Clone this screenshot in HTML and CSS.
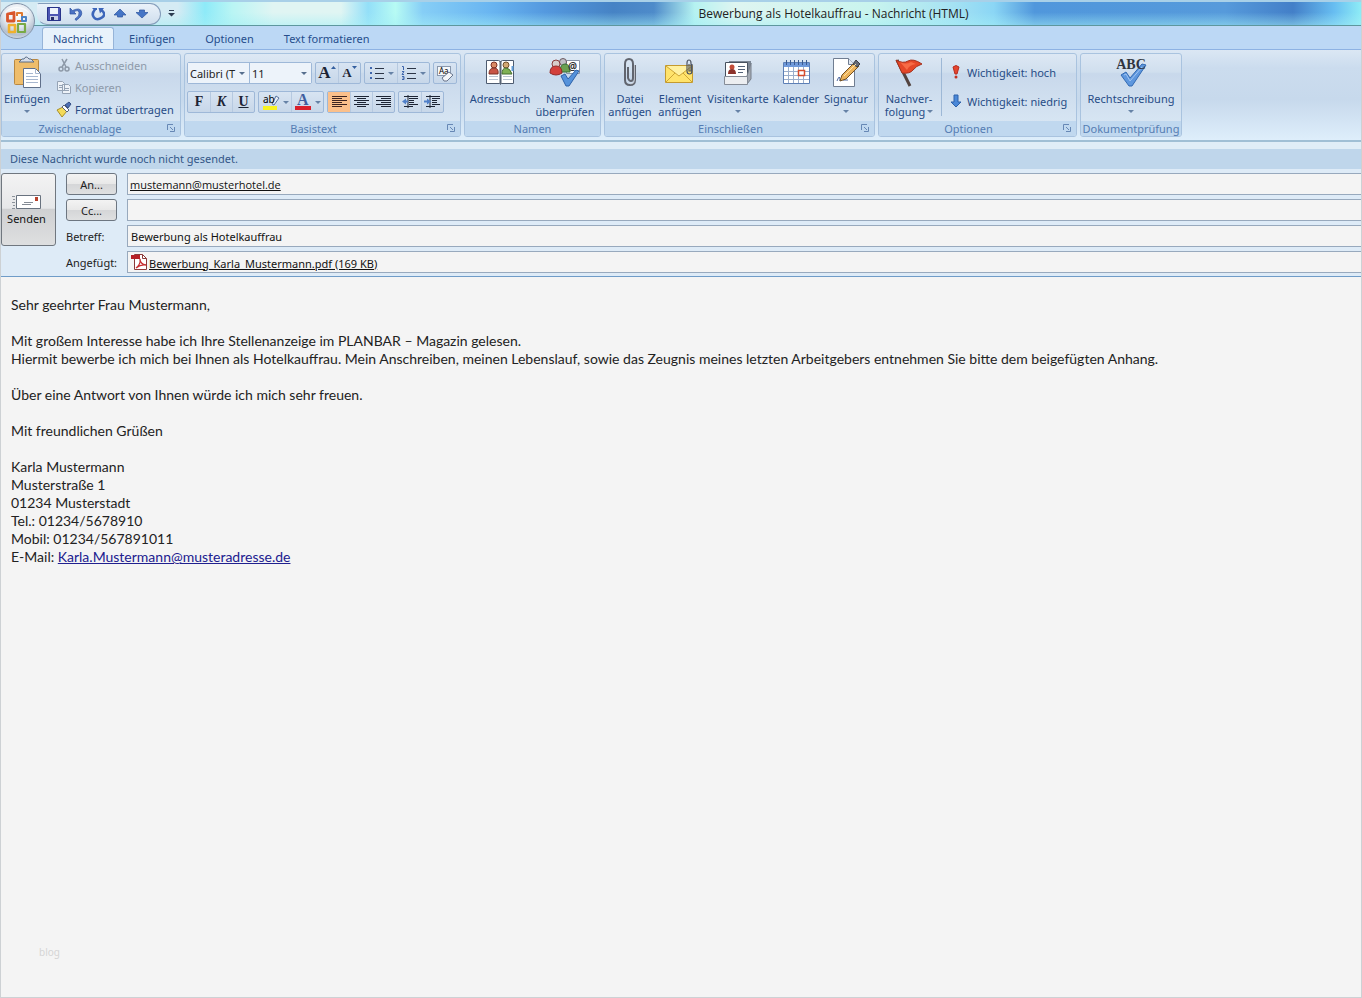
FILE: index.html
```html
<!DOCTYPE html>
<html lang="de">
<head>
<meta charset="utf-8">
<title>Bewerbung als Hotelkauffrau - Nachricht (HTML)</title>
<link rel="stylesheet" href="styles.css">
</head>
<body>
<div class="window">
  <header class="titlebar">
    <button class="office" aria-label="Office-Schaltfläche">
      <svg width="38" height="40" viewBox="0 0 38 40">
        <defs>
          <radialGradient id="orb" cx=".5" cy=".3" r=".75"><stop offset="0" stop-color="#fff"/><stop offset=".5" stop-color="#e3e9f0"/><stop offset=".8" stop-color="#b3bfcf"/><stop offset="1" stop-color="#e3ebf3"/></radialGradient>
        </defs>
        <circle cx="18" cy="20" r="17.500" fill="url(#orb)" stroke="#8292a8"/>
        <path d="M5 13q13-12 26 0-3-7-13-7T5 13z" fill="#fff" opacity=".65"/>
        <g fill="none" stroke-linejoin="round">
          <path d="M8.500 13l6.500-1.500v8.500H8.500z" stroke="#d9552b" stroke-width="2.800"/>
          <path d="M18 15v-3h5v8h-5" stroke="#e0792f" stroke-width="2"/>
          <path d="M23 16h4v4h-4z" stroke="#4b83c6" stroke-width="2"/>
          <path d="M10 24v7h6v-7z" stroke="#f0b02c" stroke-width="2.600"/>
          <path d="M19 23h7v8h-7z" stroke="#79aa46" stroke-width="2.200"/>
        </g>
      </svg>
    </button>
    <div class="quick">
      <button aria-label="Speichern"><svg width="14" height="14" viewBox="0 0 14 14"><path d="M.5.5h12l1 1v12H.5z" fill="#4d55b3" stroke="#28338a"/><path d="M3 1h8v6H3z" fill="#eef3fb"/><path d="M3 9h8v4H3z" fill="#c8cfe6"/><path d="M4 10h3v3H4z" fill="#242a66"/></svg></button>
      <button aria-label="Rückgängig"><svg width="14" height="14" viewBox="0 0 14 14"><path d="M1 1v6h6L5 5q4-3 5 .5T6 12l1 1.500Q14 9 12.500 4.500T3.500 3.500z" fill="#4a72c4" stroke="#2d51a0" stroke-width=".7"/></svg></button>
      <button aria-label="Wiederholen"><svg width="14" height="14" viewBox="0 0 14 14"><path d="M4 2.500Q0 7 3 10.500t8 0T10 3" fill="none" stroke="#3d66ba" stroke-width="2.600"/><path d="M7.500 1h5.500L9 6.500zM1 1h5v2H3z" fill="#3d66ba"/></svg></button>
      <button aria-label="Vorheriges Element"><svg width="14" height="14" viewBox="0 0 14 14"><path d="M7 2l6 6H9.500v2h-5V8H1z" fill="#4575c6" stroke="#2d559f" stroke-width=".7"/></svg></button>
      <button aria-label="Nächstes Element"><svg width="14" height="14" viewBox="0 0 14 14"><path d="M7 11L1 5.500h3.500V3h5v2.500H13z" fill="#4575c6" stroke="#2d559f" stroke-width=".7"/></svg></button>
    </div>
    <button class="customize" aria-label="Symbolleiste anpassen"><svg width="7" height="8" viewBox="0 0 7 8"><path d="M1 0h5v1H1zM0 3h7L3.500 6.500z" fill="#2c3c50"/></svg></button>
    <h1>Bewerbung als Hotelkauffrau - Nachricht (HTML)</h1>
  </header>

  <nav class="tabs">
    <button class="tab active">Nachricht</button>
    <button class="tab">Einfügen</button>
    <button class="tab">Optionen</button>
    <button class="tab">Text formatieren</button>
  </nav>

  <div class="ribbon">
    <section class="group clipboard">
      <div class="content">
        <button class="big"><svg width="32" height="32" viewBox="0 0 32 32"><rect x="3.500" y="3.500" width="24" height="25" rx="1" fill="#efbd6b" stroke="#b88842"/><path d="M8 6l3-3h2q2-4 5 0h2l3 3z" fill="#d7dde8" stroke="#5b6c84"/><path d="M12.500 12.500h12l5 5v14h-17z" fill="#fff" stroke="#60708a"/><path d="M24.500 12.500v5h5M15 20.500h12M15 23.500h12M15 26.500h12M15 17.500h7" fill="none" stroke="#a7b7cf"/></svg><span>Einfügen</span><i class="arrow"></i></button>
        <div class="stack">
          <button disabled><svg width="16" height="16" viewBox="0 0 16 16" fill="none" stroke="#8d99a8" stroke-width="1.500"><path d="M6 2l4 8M11 2L6 10"/><circle cx="5" cy="12" r="2"/><circle cx="11" cy="12" r="2"/></svg>Ausschneiden</button>
          <button disabled><svg width="16" height="16" viewBox="0 0 16 16" fill="#edf2f8" stroke="#95a3b5"><path d="M1.500 2.500h5l2 2v7h-7zM6.500 5.500h6l2 2v7h-8z"/><path d="M3 6.500h3M3 8.500h3M8 9.500h5M8 11.500h5"/></svg>Kopieren</button>
          <button><svg width="16" height="16" viewBox="0 0 16 16"><path d="M1 9l6-3 4 4-5 6z" fill="#f3db5a" stroke="#a98e27"/><path d="M6 6l2-2 5 5-2 2z" fill="#fff" stroke="#59637a"/><path d="M9 4l4-3 2 2-3 4z" fill="#4d6fb5" stroke="#344f86"/></svg>Format übertragen</button>
        </div>
      </div>
      <footer>Zwischenablage<button class="launch" aria-label="Zwischenablage öffnen"><svg width="8" height="8" viewBox="0 0 8 8"><path d="M.5 6V.5H6M3 3l3 3M7.500 3v4.500H3" fill="none" stroke="#6788b5"/></svg></button></footer>
    </section>

    <section class="group text">
      <div class="content rows">
        <div class="row">
          <div class="combos">
            <span class="combo face"><select aria-label="Schriftart"><option>Calibri (T</option></select></span>
            <span class="combo size"><select aria-label="Schriftgrad"><option>11</option></select></span>
          </div>
          <div class="set">
            <button class="glyph grow" aria-label="Schrift vergrößern">A<svg width="5" height="4" viewBox="0 0 5 4"><path d="M0 3h5L2.500 0z" fill="#345f9f"/></svg></button>
            <button class="glyph shrink" aria-label="Schrift verkleinern">A<svg width="5" height="4" viewBox="0 0 5 4"><path d="M0 0h5L2.500 3z" fill="#345f9f"/></svg></button>
          </div>
          <div class="set split">
            <button aria-label="Aufzählung"><svg width="16" height="14" viewBox="0 0 16 14"><path d="M6 2.500h9M6 7.500h9M6 12.500h9" stroke="#2c3547"/><path d="M1 1h2v2H1zM1 6h2v2H1zM1 11h2v2H1z" fill="#3e65ac"/></svg><i class="arrow"></i></button>
            <button aria-label="Nummerierung"><svg width="16" height="14" viewBox="0 0 16 14"><path d="M6 2.500h9M6 7.500h9M6 12.500h9" stroke="#2c3547"/><path d="M1 .5h1.500V4M1 5.500h2l-2 3h2M1 10.500h2v3H1M1.500 12H3" fill="none" stroke="#3e65ac"/></svg><i class="arrow"></i></button>
          </div>
          <div class="set"><button aria-label="Formatierung löschen"><svg width="19" height="17" viewBox="0 0 19 17"><rect x="1.500" y="1.500" width="13" height="9" fill="#f6f8fb" stroke="#8998ad"/><text x="3" y="9" class="tiny">Aa</text><path d="M6 13l7-6 4 3-6 6H8z" fill="#f4f6fa" stroke="#68758c"/></svg></button></div>
        </div>
        <div class="row">
          <div class="set">
            <button class="glyph">F</button><button class="glyph italic">K</button><button class="glyph under">U</button>
          </div>
          <div class="set split">
            <button aria-label="Hervorheben"><svg width="18" height="18" viewBox="0 0 18 18"><path d="M1 13h14v4H1z" fill="#f8f321"/><path d="M10 11l4-8 3 2-5 7z" fill="#e9eef6" stroke="#56739f"/><text x="1" y="10" class="mark">ab</text></svg><i class="arrow"></i></button>
            <button aria-label="Schriftfarbe"><svg width="18" height="18" viewBox="0 0 18 18"><path d="M1 13h16v4H1z" fill="#d9202b"/><text x="3" y="12" class="inkletter">A</text></svg><i class="arrow"></i></button>
          </div>
          <div class="set">
            <button class="on" aria-label="Linksbündig"><svg width="15" height="12" viewBox="0 0 15 12"><path d="M0 .5h15M0 2.500h10M0 4.500h15M0 6.500h10M0 8.500h15M0 10.500h10" stroke="#3d2420"/></svg></button>
            <button aria-label="Zentriert"><svg width="15" height="12" viewBox="0 0 15 12"><path d="M0 .5h15M3 2.500h9M0 4.500h15M3 6.500h9M0 8.500h15M3 10.500h9" stroke="#1c2434"/></svg></button>
            <button aria-label="Rechtsbündig"><svg width="15" height="12" viewBox="0 0 15 12"><path d="M0 .5h15M5 2.500h10M0 4.500h15M5 6.500h10M0 8.500h15M5 10.500h10" stroke="#1c2434"/></svg></button>
          </div>
          <div class="set">
            <button aria-label="Einzug verkleinern"><svg width="17" height="14" viewBox="0 0 17 14"><path d="M2 1.500h14M7 3.500h9M7 5.500h5M7 7.500h5M7 9.500h9M2 11.500h9M6 0v13" stroke="#1c2434"/><path d="M0 6.500l4-3v2h2v2H4v2z" fill="#5080c9"/></svg></button>
            <button aria-label="Einzug vergrößern"><svg width="17" height="14" viewBox="0 0 17 14"><path d="M2 1.500h14M8 3.500h8M8 5.500h5M8 7.500h5M8 9.500h8M2 11.500h9M6 0v13" stroke="#1c2434"/><path d="M7 6.500l-4-3v2H0v2h3v2z" fill="#5080c9"/></svg></button>
          </div>
        </div>
      </div>
      <footer>Basistext<button class="launch" aria-label="Schrift öffnen"><svg width="8" height="8" viewBox="0 0 8 8"><path d="M.5 6V.5H6M3 3l3 3M7.500 3v4.500H3" fill="none" stroke="#6788b5"/></svg></button></footer>
    </section>

    <section class="group names">
      <div class="content">
        <button class="big w-70"><svg width="32" height="32" viewBox="0 0 32 32"><path d="M2.500 4.500h12l2 1 2-1h11v23h-12l-1 1-1-1h-13z" fill="#fff" stroke="#4d5b70"/><path d="M16.500 5v23" stroke="#566273" stroke-width="2"/><path d="M5 20.500h9M5 23.500h9M19 20.500h9M19 23.500h9" stroke="#b9c4d2"/><circle cx="10" cy="9" r="3" fill="#d98a65" stroke="#7d3025"/><path d="M5 18q0-6 5-6t4 6z" fill="#c85445" stroke="#7d3025"/><circle cx="22" cy="9" r="3" fill="#d2a873" stroke="#70502c"/><path d="M18 18q0-6 4-6t6 6z" fill="#7fb054" stroke="#446c2e"/><path d="M27.500 10h2v5h-2z" fill="#63a0dc"/></svg><span>Adressbuch</span></button>
        <button class="big w-60"><svg width="32" height="32" viewBox="0 0 32 32"><path d="M17.500 4.500h13v13h-13z" fill="#fff" stroke="#8793a6"/><circle cx="14" cy="6" r="3.500" fill="#c0bfc6" stroke="#6c5960"/><path d="M11 16q0-8 5-8t5 8z" fill="#6ba051" stroke="#38733a"/><circle cx="7" cy="8" r="4" fill="#d8cdca" stroke="#883c3b"/><path d="M1 17q0-7 6-7t6 7q-6 4-12 0z" fill="#d33f3a" stroke="#932928"/><text x="19" y="14" class="at">@</text><path d="M12 20l4-2 3 5 8-9 3 1-10 15h-3z" fill="#5592db" stroke="#2e62a8"/></svg><span>Namen<br>überprüfen</span></button>
      </div>
      <footer>Namen</footer>
    </section>

    <section class="group include">
      <div class="content">
        <button class="big w-50"><svg width="32" height="32" viewBox="0 0 32 32" fill="none"><path d="M21 9v15q0 5-5 5t-5-5V8q0-5 4-5t4 5v14q0 3-2 3t-3-3V11" stroke="#61656f" stroke-width="2"/><path d="M20.500 9v15q0 4-4 4" stroke="#d1d4dc" stroke-width=".8"/></svg><span>Datei<br>anfügen</span></button>
        <button class="big w-50"><svg width="32" height="32" viewBox="0 0 32 32"><path d="M1.500 9.500h27v17h-27z" fill="#ffe36b" stroke="#c49a2f"/><path d="M2 10l13 10L28 10M2 26l9-9M28 26l-9-9" fill="#fff1a0" stroke="#cda536"/><path d="M28 8v7q0 3-2.500 3T23 15V7q0-3 2-3t2 3v8h-2V8" fill="none" stroke="#4f5663" stroke-width="1.200"/></svg><span>Element<br>anfügen</span></button>
        <button class="big w-66"><svg width="32" height="32" viewBox="0 0 32 32"><path d="M7 5h22v15H7z" fill="#7c8795"/><path d="M3.500 6.500h22v16h-22z" fill="#fff" stroke="#47515f"/><circle cx="10" cy="11" r="2.500" fill="#c34c38"/><path d="M6 18q0-5 4-5t4 5z" fill="#8c332b"/><path d="M16 10.500h7M16 13.500h7M16 16.500h5" stroke="#536278"/><path d="M25 20l4-13v16l-4 5z" fill="#a5abb4" stroke="#777f8a"/><path d="M2.500 20.500h23v8h-23z" fill="#eceef1" stroke="#858c97"/></svg><span>Visitenkarte</span><i class="arrow"></i></button>
        <button class="big w-50"><svg width="32" height="32" viewBox="0 0 32 32"><path d="M3.500 6.500h26v21h-26z" fill="#fff" stroke="#5c7fb6"/><path d="M4 7h25v4H4z" fill="#6f99db"/><path d="M6.500 4v5M10.500 4v5M14.500 4v5M18.500 4v5M22.500 4v5M26.500 4v5" stroke="#3b5b91"/><path d="M4 15.500h25M4 19.500h25M4 23.500h25M8.500 11v16M13.500 11v16M18.500 11v16M23.500 11v16" stroke="#9baecb"/><path d="M18.500 14.500h6v5h-6z" fill="#fff" stroke="#d64b2b" stroke-width="1.500"/></svg><span>Kalender</span></button>
        <button class="big w-50"><svg width="32" height="32" viewBox="0 0 32 32"><path d="M3.500 2.500h15l6 6v22h-21z" fill="#fff" stroke="#707d91"/><path d="M18.500 2.500v6h6" fill="#e0e7f1" stroke="#707d91"/><path d="M7 25q3-8 3 0 3-4 3-1h5" fill="none" stroke="#4e69a2"/><path d="M10 25l2-6L25 6l4 4-13 13z" fill="#edb45c" stroke="#735024"/><path d="M23 8l3-4 4 4-3 3z" fill="#646a76" stroke="#3d4149"/><path d="M14 20L26 8" stroke="#ffe2a5"/></svg><span>Signatur</span><i class="arrow"></i></button>
      </div>
      <footer>Einschließen<button class="launch" aria-label="Einschließen öffnen"><svg width="8" height="8" viewBox="0 0 8 8"><path d="M.5 6V.5H6M3 3l3 3M7.500 3v4.500H3" fill="none" stroke="#6788b5"/></svg></button></footer>
    </section>

    <section class="group options">
      <div class="content">
        <button class="big w-60"><svg width="32" height="32" viewBox="0 0 32 32"><path d="M4 4l13 26" stroke="#53433f" stroke-width="3"/><path d="M3 4q7 4 12 1t14 3q-6 2-9 6t-11 3z" fill="#e54728" stroke="#a4321f"/><path d="M7 6q6 3 11 0l5 2q-7 1-9 6" fill="#ff7b52" opacity=".7"/></svg><span>Nachver-<br>folgung<i class="arrow inline"></i></span></button>
        <div class="priority">
          <button><svg width="16" height="16" viewBox="0 0 16 16"><path d="M5 3q3-3 6 0L9 10H7z" fill="#e5452e" stroke="#b52c20"/><circle cx="8" cy="13" r="1.500" fill="#c33020"/></svg>Wichtigkeit: hoch</button>
          <button><svg width="16" height="16" viewBox="0 0 16 16"><path d="M6 2h4v7h3l-5 5-5-5h3z" fill="#4a88d8" stroke="#2d61aa"/></svg>Wichtigkeit: niedrig</button>
        </div>
      </div>
      <footer>Optionen<button class="launch" aria-label="Optionen öffnen"><svg width="8" height="8" viewBox="0 0 8 8"><path d="M.5 6V.5H6M3 3l3 3M7.500 3v4.500H3" fill="none" stroke="#6788b5"/></svg></button></footer>
    </section>

    <section class="group proof">
      <div class="content">
        <button class="big w-100"><svg width="34" height="32" viewBox="0 0 34 32"><path d="M7 19l5-3 4 6L28 8l4 1-14 21h-3z" fill="#5e97de" stroke="#326ab3"/><path d="M10 19l2-1 4 7L28 11" fill="none" stroke="#9fc5f3"/><text x="17" y="13" text-anchor="middle" class="abc">ABC</text></svg><span>Rechtschreibung</span><i class="arrow"></i></button>
      </div>
      <footer>Dokumentprüfung</footer>
    </section>
  </div>

  <p class="info">Diese Nachricht wurde noch nicht gesendet.</p>

  <form class="envelope">
    <button type="button" class="send"><svg width="30" height="16" viewBox="0 0 30 16"><path d="M4.500 1.500h24v13h-24z" fill="#fff" stroke="#68727f"/><path d="M23 3h3v4h-3z" fill="#b7412c"/><path d="M12 8.500h9M10 10.500h9" stroke="#848b94"/><path d="M0 2.500h3M1 5.500h2M0 8.500h3M1 11.500h2M0 14.500h3" stroke="#8b929a"/></svg><span>Senden</span></button>
    <div class="fields">
      <button type="button" class="pick" id="to">An...</button><input class="address" aria-labelledby="to" value="mustemann@musterhotel.de">
      <button type="button" class="pick" id="cc">Cc...</button><input aria-labelledby="cc">
      <label for="subject">Betreff:</label><input id="subject" value="Bewerbung als Hotelkauffrau">
      <span class="label">Angefügt:</span>
      <div class="attachments"><svg width="16" height="16" viewBox="0 0 16 16"><path d="M3.500.5h8l4 4v11h-12z" fill="#fff" stroke="#8c3938"/><path d="M11.500.5v4h4" fill="none" stroke="#8c3938"/><path d="M0 1h9v4H0z" fill="#b62026"/><path d="M5 14q5-4 4-9 0 5 6 6-5-1-10 3z" fill="none" stroke="#c72e31" stroke-width="1.300"/></svg><a href="#">Bewerbung_Karla_Mustermann.pdf (169 KB)</a></div>
    </div>
  </form>

  <main class="message">
    <p>Sehr geehrter Frau Mustermann,</p>
    <p>Mit großem Interesse habe ich Ihre Stellenanzeige im PLANBAR – Magazin gelesen.<br>Hiermit bewerbe ich mich bei Ihnen als Hotelkauffrau. Mein Anschreiben, meinen Lebenslauf, sowie das Zeugnis meines letzten Arbeitgebers entnehmen Sie bitte dem beigefügten Anhang.</p>
    <p>Über eine Antwort von Ihnen würde ich mich sehr freuen.</p>
    <p>Mit freundlichen Grüßen</p>
    <address>Karla Mustermann<br>Musterstraße 1<br>01234 Musterstadt<br>Tel.: 01234/5678910<br>Mobil: 01234/567891011<br>E-Mail: <a href="#">Karla.Mustermann@musteradresse.de</a></address>
    <small>blog</small>
  </main>
</div>
</body>
</html>
```
FILE: styles.css
```css
* { box-sizing: border-box; }
body { margin: 0; background: #f4f4f4; font-family: "Noto Sans", Tahoma, sans-serif; font-size: 11px; line-height: 13px; color: #222; }
button, input, select { font: inherit; color: inherit; }
button { padding: 0; border: 0; background: none; }
svg { display: block; flex: none; }
p, h1 { margin: 0; }

.window { display: flex; flex-direction: column; min-height: 100vh; border: 1px solid #cdd1d4; border-top: 0; }

.titlebar { position: relative; display: flex; align-items: center; height: 26px; padding-left: 36px; border-top: 2px solid #a8d0e8; border-bottom: 1px solid #5e979e;
  background:
    linear-gradient(#0000 45%, #a5eff580),
    linear-gradient(90deg, #d5ebf4 13%, #8eeaf8 15%, #b9f5f4 17%, #e0f5f3 20%, #e0f5f3 25%, #93dff8 27%, #b7fbf4 29%, #86cef6 31%, #69b5f1 36%, #5499df 40%, #4683c5 45%, #4e8bca 48%, #b5f2f1 51%, #def5f1 54%, #c9f4ee 64%, #a5e2f3 70%, #8bd6f5 73%, #5097dc 76%, #569adb 90%, #437fc8 95%, #67bdf1 98%, #8eecf6); }
.office { position: absolute; z-index: 2; left: -2px; top: -1px; }
.quick { display: flex; align-items: center; gap: 8px; height: 22px; padding: 0 11px 0 9px; border: 1px solid #839cba; border-left-color: #0000; border-radius: 2px 11px 11px 10px; background: linear-gradient(#eaf2fa, #cfdeed); }
.customize { padding: 4px 7px; }
.titlebar h1 { flex: 1; padding-left: 124px; text-align: center; font: 12px/16px "Open Sans", sans-serif; color: #222; }

.tabs { display: flex; align-items: end; height: 23px; padding-left: 41px; background: #bcd8f5; color: #264e8c; }
.tab { height: 22px; padding: 0 15px; }
.tab.active { padding: 0 10px; border: 1px solid #96b4d8; border-bottom: 0; border-radius: 3px 3px 0 0; background: #e8f2fb; }

.ribbon { display: flex; gap: 3px; padding: 3px 0 3px; border-top: 1px solid #8db2e3; border-bottom: 2px solid #a0bfd5; background: linear-gradient(#dbe7f4, #cbdcee 20%, #c7d9ec 55%, #deeefb); color: #274c86; }
.group { display: flex; flex-direction: column; height: 84px; border: 1px solid #a9c3df; border-radius: 3px; background: linear-gradient(#dde8f4, #d0dfee 22%, #c8d8eb 24%, #dbe9f5); overflow: hidden; }
.content { display: flex; flex: 1; }
.group footer { position: relative; height: 15px; background: #c0d8ef; color: #557db3; text-align: center; line-height: 15px; }
.launch { position: absolute; right: 5px; top: 3px; }
.clipboard { width: 180px; }
.clipboard footer { padding-right: 22px; }
.text { width: 277px; }
.text footer, .options footer { padding-right: 18px; }
.include footer { padding-right: 18px; }
.names { width: 137px; }
.include { width: 271px; }
.options { width: 199px; }
.proof { width: 102px; }
.big { display: flex; flex-direction: column; align-items: center; width: 50px; padding-top: 2px; line-height: 13px; white-space: nowrap; }
.big span { margin-top: 4px; }
.w-50 { width: 50px; }
.w-60 { width: 60px; }
.w-66 { width: 66px; }
.w-70 { width: 70px; }
.w-100 { width: 100px; }
.arrow { display: inline-block; width: 5px; border: solid #0000; border-top-color: #6682a6; border-width: 3px 3px 0; }
.big > .arrow { margin-top: 5px; }
.arrow.inline { margin: 0 0 3px 2px; }
.stack { display: flex; flex-direction: column; padding-left: 4px; }
.stack button { display: flex; align-items: center; gap: 3px; height: 22px; white-space: nowrap; }
.stack button:disabled { color: #8e9aaa; }
.rows { flex-direction: column; gap: 7px; padding: 8px 2px 0; }
.row { display: flex; gap: 3px; height: 22px; }
.combos, .set { display: flex; border: 1px solid #9eb8d8; border-radius: 2px; }
.combo { position: relative; background: #edf3fa; }
.combo::after { content: ""; position: absolute; right: 4px; top: 9px; border: solid #0000; border-top-color: #566e8d; border-width: 3px 3px 0; }
.combo select { appearance: none; width: 100%; height: 20px; border: 0; padding: 0 0 0 2px; background: none; color: #222; }
.face { width: 62px; border-right: 1px solid #9eb8d8; }
.size { width: 61px; }
.set { background: linear-gradient(#d8e4f2, #c7d7e9); }
.set button { display: flex; align-items: center; justify-content: center; gap: 3px; width: 22px; color: #1c2434; }
.set button + button { border-left: 1px solid #b6c9e0; }
.set.split button { width: 32px; }
.set .on { background: #fbc08b; }
.set .glyph { font: bold 14px/20px "Liberation Serif", serif; }
.set .grow { gap: 0; font-size: 17px; }
.set .shrink { gap: 0; font-size: 13px; }
.grow svg, .shrink svg { align-self: start; margin-top: 3px; }
.set .italic { font-style: italic; }
.set .under { text-decoration: underline; }
.tiny { font: 8px "Noto Sans", sans-serif; }
.mark { font: 10px "Noto Sans", sans-serif; }
.inkletter { font: bold 16px "Liberation Serif", serif; fill: #405f9f; }
.at { font: bold 10px "Noto Sans", sans-serif; fill: #333; }
.abc { font: bold 14px "Liberation Serif", serif; fill: #303540; }
.priority { display: flex; flex-direction: column; gap: 13px; margin: 4px 0 5px 2px; padding: 6px 0 0 6px; border-left: 1px solid #9db8d6; }
.priority button { display: flex; align-items: center; gap: 3px; height: 16px; white-space: nowrap; }

.info { padding: 3px 9px 4px; border-top: 7px solid #e0edf7; background: #bfd6eb; color: #335788; }

.envelope { display: flex; gap: 10px; padding: 4px 0 3px; border-bottom: 1px solid #6f9cc8; background: #deebf7; }
.send { display: flex; flex-direction: column; align-items: center; justify-content: center; gap: 2px; width: 55px; height: 73px; border: 1px solid #70777f; border-radius: 3px; background: linear-gradient(#f3f3f3, #e6e7e9 48%, #cfd0d2 50%, #dedfe0); padding-right: 4px; color: #111; }
.fields { flex: 1; display: grid; grid-template-columns: 51px 1fr; column-gap: 10px; row-gap: 4px; align-items: center; }
.pick { height: 22px; border: 1px solid #6d7681; border-radius: 3px; background: linear-gradient(#f3f3f3, #e8e8e8 50%, #d5d6d8 52%, #dfe0e1); }
.fields label, .fields .label { white-space: nowrap; color: #222; }
.fields input, .attachments { width: 100%; height: 22px; padding: 0 3px; border: 1px solid #98a9bd; border-right: 0; background: #f4f4f4; color: #111; }
.fields .address { padding: 0 2px; font-family: "Open Sans", sans-serif; text-decoration: underline; }
.attachments { display: flex; align-items: center; gap: 2px; }
.attachments a { padding-top: 2px; color: #111; }

.message { flex: 1; display: flex; flex-direction: column; gap: 18px; padding: 19px 10px 37px; background: #f4f4f4; font: 14px/18px Lato, Calibri, sans-serif; color: #222; }
.message address { font-style: normal; }
.message address a { color: #20208f; }
.message small { margin-top: auto; padding-left: 28px; font: 10px/16px "Noto Sans", sans-serif; color: #d5d5d5; }
```
